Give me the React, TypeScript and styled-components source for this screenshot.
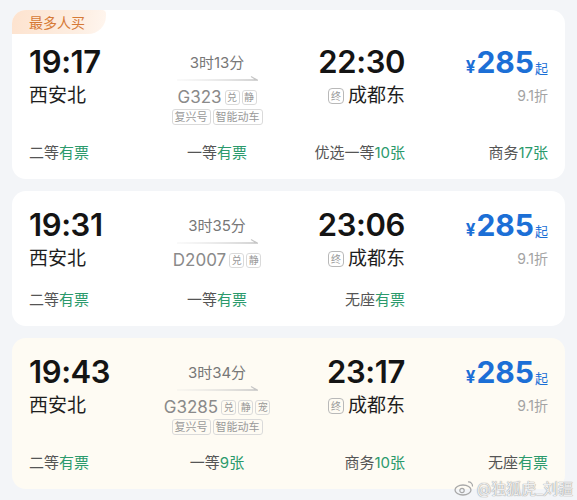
import React from "react";
import styled, { createGlobalStyle } from "styled-components";

type Seat = { label: string; value: string } | null;

interface TrainItem {
  depart: string;
  arrive: string;
  duration: string;
  code: string;
  marks: string[];
  tags: string[];
  price: string;
  discount: string;
  seats: Seat[];
  hot?: boolean;
  tinted?: boolean;
}

const trains: TrainItem[] = [
  {
    depart: "19:17",
    arrive: "22:30",
    duration: "3时13分",
    code: "G323",
    marks: ["兑", "静"],
    tags: ["复兴号", "智能动车"],
    price: "285",
    discount: "9.1折",
    seats: [
      { label: "二等", value: "有票" },
      { label: "一等", value: "有票" },
      { label: "优选一等", value: "10张" },
      { label: "商务", value: "17张" },
    ],
    hot: true,
  },
  {
    depart: "19:31",
    arrive: "23:06",
    duration: "3时35分",
    code: "D2007",
    marks: ["兑", "静"],
    tags: [],
    price: "285",
    discount: "9.1折",
    seats: [
      { label: "二等", value: "有票" },
      { label: "一等", value: "有票" },
      { label: "无座", value: "有票" },
      null,
    ],
  },
  {
    depart: "19:43",
    arrive: "23:17",
    duration: "3时34分",
    code: "G3285",
    marks: ["兑", "静", "宠"],
    tags: ["复兴号", "智能动车"],
    price: "285",
    discount: "9.1折",
    seats: [
      { label: "二等", value: "有票" },
      { label: "一等", value: "9张" },
      { label: "商务", value: "10张" },
      { label: "无座", value: "有票" },
    ],
    tinted: true,
  },
];

const GlobalStyle = createGlobalStyle`
  * { box-sizing: border-box; }
  body {
    margin: 0;
    background: #f3f5f8;
    font-family: "Inter", "Noto Sans CJK SC", sans-serif;
  }
`;

const Page = styled.div`
  position: relative;
  min-height: 500px;
  padding: 10px 12px;
  display: flex;
  flex-direction: column;
  gap: 12px;
  overflow: hidden;
`;

const Card = styled.div<{ $hot?: boolean; $tinted?: boolean }>`
  position: relative;
  background: ${(p) => (p.$tinted ? "#fefbf3" : "#ffffff")};
  border-radius: 14px;
  padding: ${(p) => (p.$hot ? "34px" : "16px")} 17px 15px;
  overflow: hidden;
`;

const HotBadge = styled.div`
  position: absolute;
  top: 0;
  left: 0;
  height: 24px;
  width: 94px;
  padding-left: 17px;
  display: flex;
  align-items: center;
  font-size: 14px;
  color: #d67a36;
  background: linear-gradient(100deg, #fde3cf 0%, #fdeee2 70%, #fff6ef 100%);
  border-bottom-right-radius: 18px;
  border-top-right-radius: 4px;
`;

const Columns = styled.div`
  display: grid;
  grid-template-columns: 120px 136px 120px 1fr;
  align-items: start;
`;

const Col = styled.div<{ $align: "start" | "center" | "end" }>`
  display: flex;
  flex-direction: column;
  align-items: ${(p) => (p.$align === "start" ? "flex-start" : p.$align === "end" ? "flex-end" : "center")};
`;

const Time = styled.div`
  font-size: 31px;
  line-height: 36px;
  font-weight: 600;
  color: #141414;
  letter-spacing: -0.4px;
`;

const Station = styled.div`
  margin-top: 3px;
  height: 26px;
  display: flex;
  align-items: center;
  gap: 4px;
  font-size: 19px;
  line-height: 26px;
  color: #1e1e1e;
`;

const EndMark = styled.span`
  width: 16px;
  height: 16px;
  border: 1px solid #b9b9b9;
  border-radius: 4px;
  font-size: 10px;
  line-height: 14px;
  text-align: center;
  color: #9a9a9a;
`;

const Duration = styled.div`
  margin-top: 9px;
  font-size: 15px;
  line-height: 20px;
  color: #777;
`;

const ArrowLine = styled.svg`
  margin-top: 2px;
  display: block;
`;

const TrainRow = styled.div`
  margin-top: 6px;
  height: 20px;
  display: flex;
  align-items: center;
  gap: 2px;
`;

const Code = styled.span`
  font-size: 17px;
  color: #8a8a8a;
  margin-right: 1px;
`;

const Mark = styled.span`
  width: 15px;
  height: 15px;
  border: 1px solid #dadada;
  border-radius: 3px;
  font-size: 10px;
  line-height: 13px;
  text-align: center;
  color: #999;
`;

const TagRow = styled.div`
  margin-top: 2px;
  display: flex;
  gap: 2px;
`;

const Tag = styled.span`
  height: 16px;
  padding: 0 2px;
  border: 1px solid #dadada;
  border-radius: 3px;
  font-size: 11px;
  line-height: 14px;
  color: #999;
`;

const Price = styled.div`
  height: 36px;
  display: flex;
  align-items: baseline;
  color: #1c6fd6;
`;

const Yen = styled.span`
  font-size: 17px;
  line-height: 1;
  font-weight: 700;
  margin-right: 1px;
`;

const Amount = styled.span`
  font-size: 30px;
  line-height: 36px;
  font-weight: 700;
`;

const Qi = styled.span`
  font-size: 13px;
  line-height: 1;
  margin-left: 1px;
`;

const Discount = styled.div`
  margin-top: 3px;
  font-size: 14px;
  line-height: 26px;
  color: #a3a3a3;
`;

const SeatRow = styled(Columns)`
  margin-top: 17px;
`;

const SeatCell = styled.div<{ $align: "start" | "center" | "end" }>`
  font-size: 15px;
  line-height: 22px;
  color: #555;
  text-align: ${(p) => (p.$align === "start" ? "left" : p.$align === "end" ? "right" : "center")};
`;

const SeatValue = styled.span`
  color: #2b9a6c;
`;

const Watermark = styled.div`
  position: absolute;
  right: 4px;
  bottom: 2px;
  display: flex;
  align-items: center;
  gap: 3px;
  font-size: 15px;
  color: rgba(255, 255, 255, 0.85);
  text-shadow: 0 0 1px #9a9a9a, 0 0 1px #9a9a9a;
`;

const aligns: ("start" | "center" | "end")[] = ["start", "center", "end", "end"];

const TrainCard = ({ train }: { train: TrainItem }) => (
  <Card $hot={train.hot} $tinted={train.tinted}>
    {train.hot && <HotBadge>最多人买</HotBadge>}
    <Columns>
      <Col $align="start">
        <Time>{train.depart}</Time>
        <Station>西安北</Station>
      </Col>
      <Col $align="center">
        <Duration>{train.duration}</Duration>
        <ArrowLine width="82" height="6" viewBox="0 0 82 6">
          <defs>
            <linearGradient id="ln" x1="0" x2="1" y1="0" y2="0">
              <stop offset="0" stopColor="#dcdcdc" stopOpacity="0.2" />
              <stop offset="1" stopColor="#c4c4c4" />
            </linearGradient>
          </defs>
          <path d="M1 5 H81 L75 1.5" fill="none" stroke="url(#ln)" strokeWidth="1.3" />
        </ArrowLine>
        <TrainRow>
          <Code>{train.code}</Code>
          {train.marks.map((m) => (
            <Mark key={m}>{m}</Mark>
          ))}
        </TrainRow>
        {train.tags.length > 0 && (
          <TagRow>
            {train.tags.map((t) => (
              <Tag key={t}>{t}</Tag>
            ))}
          </TagRow>
        )}
      </Col>
      <Col $align="end">
        <Time>{train.arrive}</Time>
        <Station>
          <EndMark>终</EndMark>成都东
        </Station>
      </Col>
      <Col $align="end">
        <Price>
          <Yen>¥</Yen>
          <Amount>{train.price}</Amount>
          <Qi>起</Qi>
        </Price>
        <Discount>{train.discount}</Discount>
      </Col>
    </Columns>
    <SeatRow>
      {train.seats.map((s, i) => (
        <SeatCell key={i} $align={aligns[i]}>
          {s && (
            <>
              {s.label}
              <SeatValue>{s.value}</SeatValue>
            </>
          )}
        </SeatCell>
      ))}
    </SeatRow>
  </Card>
);

const App = () => (
  <>
    <GlobalStyle />
    <Page>
      {trains.map((t) => (
        <TrainCard key={t.code} train={t} />
      ))}
      <Watermark>
        <svg width="20" height="16" viewBox="0 0 20 16">
          <ellipse cx="9" cy="10" rx="8" ry="5" fill="none" stroke="#a8a8a8" strokeWidth="1.3" />
          <circle cx="8" cy="10.5" r="2.2" fill="none" stroke="#a8a8a8" strokeWidth="1.2" />
          <path d="M14 2 A4 4 0 0 1 18.5 6.5" fill="none" stroke="#a8a8a8" strokeWidth="1.2" />
        </svg>
        @独狐虎_刘疆
      </Watermark>
    </Page>
  </>
);

export default App;
